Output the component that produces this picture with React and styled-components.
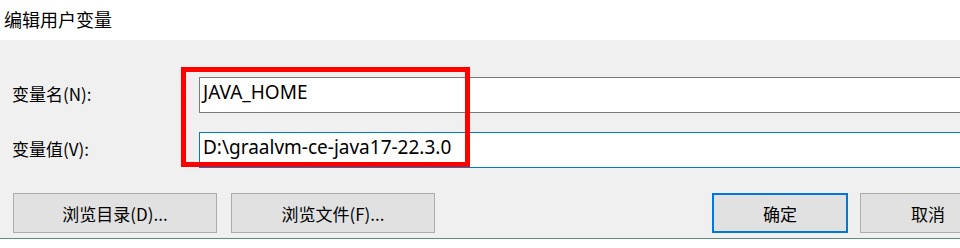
import styled, { createGlobalStyle } from 'styled-components';

const Global = createGlobalStyle`
  html, body {
    margin: 0;
    padding: 0;
    background: #ffffff;
  }
  body {
    font-family: "Noto Sans", "Noto Sans CJK SC", sans-serif;
    color: #000;
  }
`;

const Dialog = styled.div`
  width: 960px;
  height: 248px;
  overflow: hidden;
  position: relative;
  background: #fff;
`;

const TitleBar = styled.div`
  height: 40px;
  display: flex;
  align-items: center;
  padding: 0 0 2px 4px;
  box-sizing: border-box;
  font-family: "Noto Sans CJK SC", sans-serif;
  font-size: 18px;
  background: #fff;
`;

const Panel = styled.div`
  height: 199px;
  box-sizing: border-box;
  background: #f0f0f0;
  border-bottom: 1px solid #5c8d7d;
  padding-top: 36px;
  position: relative;
`;

const Fields = styled.div`
  display: grid;
  grid-template-columns: 187px 800px;
  row-gap: 18px;
  padding-left: 12px;
  align-items: center;
`;

const Label = styled.label`
  font-family: "Noto Sans CJK SC", sans-serif;
  font-size: 17px;
  line-height: 36px;
  padding-bottom: 1px;
`;

const TextBox = styled.div`
  height: 36px;
  box-sizing: border-box;
  background: #fff;
  border: 1px solid ${({ $focused }) => ($focused ? '#0078d7' : '#7a7a7a')};
  padding: 0 0 5px 3px;
  display: flex;
  align-items: center;
  font-family: "Noto Sans", "Noto Sans CJK SC", sans-serif;
  font-size: 19px;
  white-space: nowrap;
`;

const Highlight = styled.div`
  position: absolute;
  left: 181px;
  top: 27px;
  width: 289px;
  height: 100px;
  box-sizing: border-box;
  border: 5px solid #ff0000;
  pointer-events: none;
`;

const ButtonRow = styled.div`
  display: flex;
  margin-top: 25px;
  padding-left: 13px;
`;

const Button = styled.button`
  width: ${({ $w }) => $w}px;
  flex: none;
  height: 40px;
  box-sizing: border-box;
  margin-left: ${({ $gap }) => $gap || 0}px;
  background: #e1e1e1;
  border: ${({ $primary }) => ($primary ? '2px solid #0078d7' : '1px solid #adadad')};
  font-family: "Noto Sans CJK SC", sans-serif;
  font-size: 17px;
  color: #000;
  padding: 0;
  display: flex;
  align-items: center;
  justify-content: center;
`;

export default function App() {
  return (
    <Dialog>
      <Global />
      <TitleBar>编辑用户变量</TitleBar>
      <Panel>
        <Fields>
          <Label>变量名(N):</Label>
          <TextBox>JAVA_HOME</TextBox>
          <Label>变量值(V):</Label>
          <TextBox $focused>D:\graalvm-ce-java17-22.3.0</TextBox>
        </Fields>
        <ButtonRow>
          <Button $w={204}>浏览目录(D)...</Button>
          <Button $w={204} $gap={14}>浏览文件(F)...</Button>
          <Button $w={136} $gap={277} $primary>确定</Button>
          <Button $w={136} $gap={12}>取消</Button>
        </ButtonRow>
        <Highlight />
      </Panel>
    </Dialog>
  );
}
